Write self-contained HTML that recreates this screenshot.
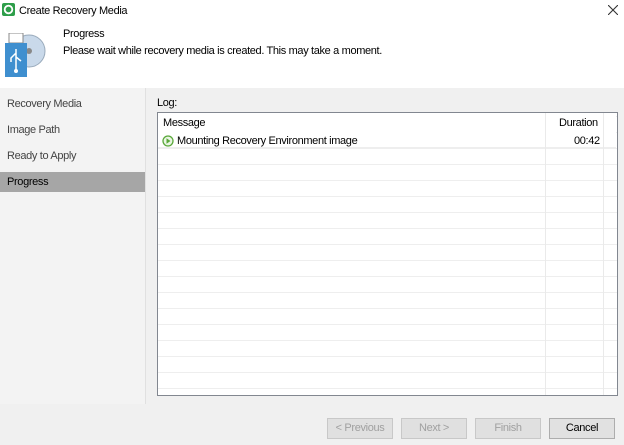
<!DOCTYPE html><html><head><style>
body{margin:0;width:624px;height:445px;background:#f0f0f0;font-family:"Liberation Sans",sans-serif;font-size:11px;letter-spacing:-0.35px;color:#000;position:relative;overflow:hidden}
.a{position:absolute}
.btn{position:absolute;top:418px;width:64px;height:19px;border:1px solid #c8c8c8;background:#e0e0e0;color:#a0a0a0;text-align:center;line-height:19px;font-size:11px}
.nav{position:absolute;left:7px;font-size:11px;color:#444}
</style></head><body>
<div class="a" style="left:0;top:0;width:624px;height:88px;background:#fff"></div>
<svg class="a" style="left:2px;top:3px" width="13" height="13"><rect x="0" y="0" width="13" height="13" rx="2" fill="#2e9e4a"/><circle cx="6.5" cy="6.5" r="3.8" fill="none" stroke="#fff" stroke-width="1.8"/></svg>
<div class="a" style="left:19px;top:5px;font-size:11px">Create Recovery Media</div>
<svg class="a" style="left:608px;top:5px" width="10" height="10"><path d="M0 0L10 10M10 0L0 10" stroke="#333" stroke-width="1.1"/></svg>
<svg class="a" style="left:3px;top:33px" width="46" height="46"><circle cx="26" cy="18" r="16" fill="#c9d9ea" stroke="#9ab" stroke-width="1"/><circle cx="26" cy="18" r="3" fill="#888"/><rect x="6" y="0" width="14" height="10" fill="#fff" stroke="#888"/><rect x="2" y="10" width="22" height="34" fill="#3f8fcf"/><path d="M13 16v22M13 20l-5 5v4M13 24l5 4" stroke="#fff" stroke-width="1.5" fill="none"/><circle cx="13" cy="38" r="2" fill="#fff"/></svg>
<div class="a" style="left:63px;top:28px">Progress</div>
<div class="a" style="left:63px;top:45px">Please wait while recovery media is created. This may take a moment.</div>
<div class="a" style="left:0;top:88px;width:145px;height:316px;background:#f3f3f3"></div>
<div class="a" style="left:145px;top:88px;width:1px;height:316px;background:#e0e0e0"></div>
<div class="nav" style="top:98px">Recovery Media</div>
<div class="nav" style="top:124px">Image Path</div>
<div class="nav" style="top:150px">Ready to Apply</div>
<div class="a" style="left:0;top:172px;width:145px;height:20px;background:#a6a6a6"></div>
<div class="nav" style="top:176px;color:#000">Progress</div>
<div class="a" style="left:157px;top:97px">Log:</div>
<div class="a" style="left:157px;top:112px;width:459px;height:282px;background:#fff;border:1px solid #828790;
background-image:linear-gradient(#eee 1px,transparent 1px);background-size:100% 16px;background-position:0 35px"></div>
<div class="a" style="left:158px;top:113px;width:458px;height:34px;background:#fff"></div>
<div class="a" style="left:158px;top:147px;width:458px;height:1px;background:#eee"></div>
<div class="a" style="left:545px;top:113px;width:1px;height:282px;background:#eaeaea"></div>
<div class="a" style="left:603px;top:113px;width:1px;height:282px;background:#eaeaea"></div>
<div class="a" style="left:163px;top:117px">Message</div>
<div class="a" style="left:559px;top:117px">Duration</div>
<svg class="a" style="left:162px;top:135px" width="12" height="12"><circle cx="6" cy="6" r="5" fill="#eaf6e4" stroke="#5aa83a" stroke-width="1.3"/><path d="M4.5 3.3l4 2.7-4 2.7z" fill="#5aa83a"/></svg>
<div class="a" style="left:177px;top:135px">Mounting Recovery Environment image</div>
<div class="a" style="left:574px;top:135px">00:42</div>
<div class="btn" style="left:327px">&lt; Previous</div>
<div class="btn" style="left:401px">Next &gt;</div>
<div class="btn" style="left:475px">Finish</div>
<div class="btn" style="left:549px;background:#e1e1e1;border-color:#adadad;color:#000">Cancel</div>
</body></html>
